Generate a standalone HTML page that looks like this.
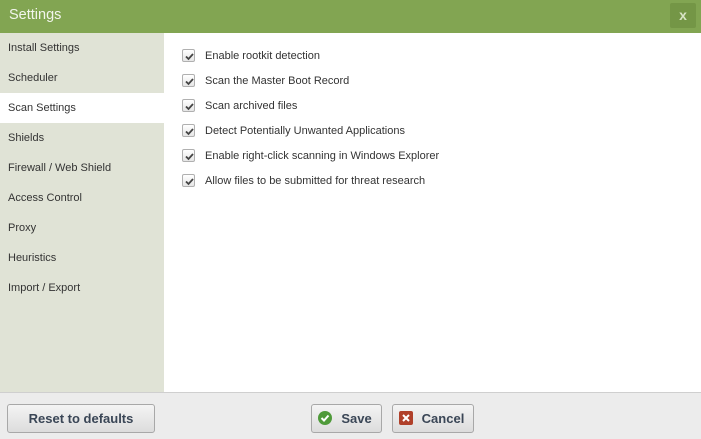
<!DOCTYPE html>
<html><head><style>
*{margin:0;padding:0;box-sizing:border-box}
body{width:701px;height:439px;overflow:hidden;font-family:"Liberation Sans",sans-serif;font-size:11px;color:#333;background:#fff;position:relative}
.hdr{position:absolute;left:0;top:0;width:701px;height:33px;background:#82a552;color:#f2f5ec;font-size:14.5px;line-height:30px;padding-left:9px}
.x{position:absolute;left:670px;top:3px;width:26px;height:25px;background:#749646;border-radius:2px;color:#d8e4c6;font-weight:bold;font-size:14px;text-align:center;line-height:25px}
.side{position:absolute;left:0;top:33px;width:164px;height:360px;background:#e0e3d6}
.side div{height:30px;line-height:30px;padding-left:8px;font-size:11px;color:#333}
.side .sel{background:#fff}
.opt{position:absolute;left:182px;height:14px;font-size:11px}
.cb{position:absolute;left:0;top:0;width:13px;height:13px;border:1px solid #b0b0b0;border-radius:2px;background:linear-gradient(#fff,#e6e6e6)}
.cb svg{position:absolute;left:1px;top:1px}
.opt span{position:absolute;left:23px;top:1px;white-space:nowrap}
.foot{position:absolute;left:0;top:392px;width:701px;height:47px;background:#ececec;border-top:1px solid #cfcfcf}
.btn{position:absolute;top:11px;height:29px;border:1px solid #a8a8a8;border-radius:3px;background:linear-gradient(#f4f4f4,#dcdcdc);font-weight:bold;font-size:13px;color:#3a4656;text-align:center;line-height:27px}
</style></head><body>
<div class="hdr">Settings</div>
<div class="x">x</div>
<div class="side">
<div>Install Settings</div><div>Scheduler</div><div class="sel">Scan Settings</div><div>Shields</div><div>Firewall / Web Shield</div><div>Access Control</div><div>Proxy</div><div>Heuristics</div><div>Import / Export</div>
</div>
<div class="opt" style="top:49px"><div class="cb"><svg width="11" height="11"><path d="M2 5.5L4.5 8L9 3" stroke="#444" stroke-width="1.8" fill="none"/></svg></div><span>Enable rootkit detection</span></div>
<div class="opt" style="top:74px"><div class="cb"><svg width="11" height="11"><path d="M2 5.5L4.5 8L9 3" stroke="#444" stroke-width="1.8" fill="none"/></svg></div><span>Scan the Master Boot Record</span></div>
<div class="opt" style="top:99px"><div class="cb"><svg width="11" height="11"><path d="M2 5.5L4.5 8L9 3" stroke="#444" stroke-width="1.8" fill="none"/></svg></div><span>Scan archived files</span></div>
<div class="opt" style="top:124px"><div class="cb"><svg width="11" height="11"><path d="M2 5.5L4.5 8L9 3" stroke="#444" stroke-width="1.8" fill="none"/></svg></div><span>Detect Potentially Unwanted Applications</span></div>
<div class="opt" style="top:149px"><div class="cb"><svg width="11" height="11"><path d="M2 5.5L4.5 8L9 3" stroke="#444" stroke-width="1.8" fill="none"/></svg></div><span>Enable right-click scanning in Windows Explorer</span></div>
<div class="opt" style="top:174px"><div class="cb"><svg width="11" height="11"><path d="M2 5.5L4.5 8L9 3" stroke="#444" stroke-width="1.8" fill="none"/></svg></div><span>Allow files to be submitted for threat research</span></div>
<div class="foot">
<div class="btn" style="left:7px;width:148px">Reset to defaults</div>
<div class="btn" style="left:311px;width:71px;padding-left:20px"><svg width="14" height="14" style="position:absolute;left:6px;top:6px"><circle cx="7" cy="7" r="7" fill="#4f9a3a"/><path d="M3.5 7L6 9.5L10.5 4.5" stroke="#fff" stroke-width="2" fill="none"/></svg>Save</div>
<div class="btn" style="left:392px;width:82px;padding-left:20px"><svg width="14" height="14" style="position:absolute;left:6px;top:6px"><rect width="14" height="14" rx="2" fill="#b0402a"/><path d="M4 4L10 10M10 4L4 10" stroke="#fff" stroke-width="2"/></svg>Cancel</div>
</div>
</body></html>
